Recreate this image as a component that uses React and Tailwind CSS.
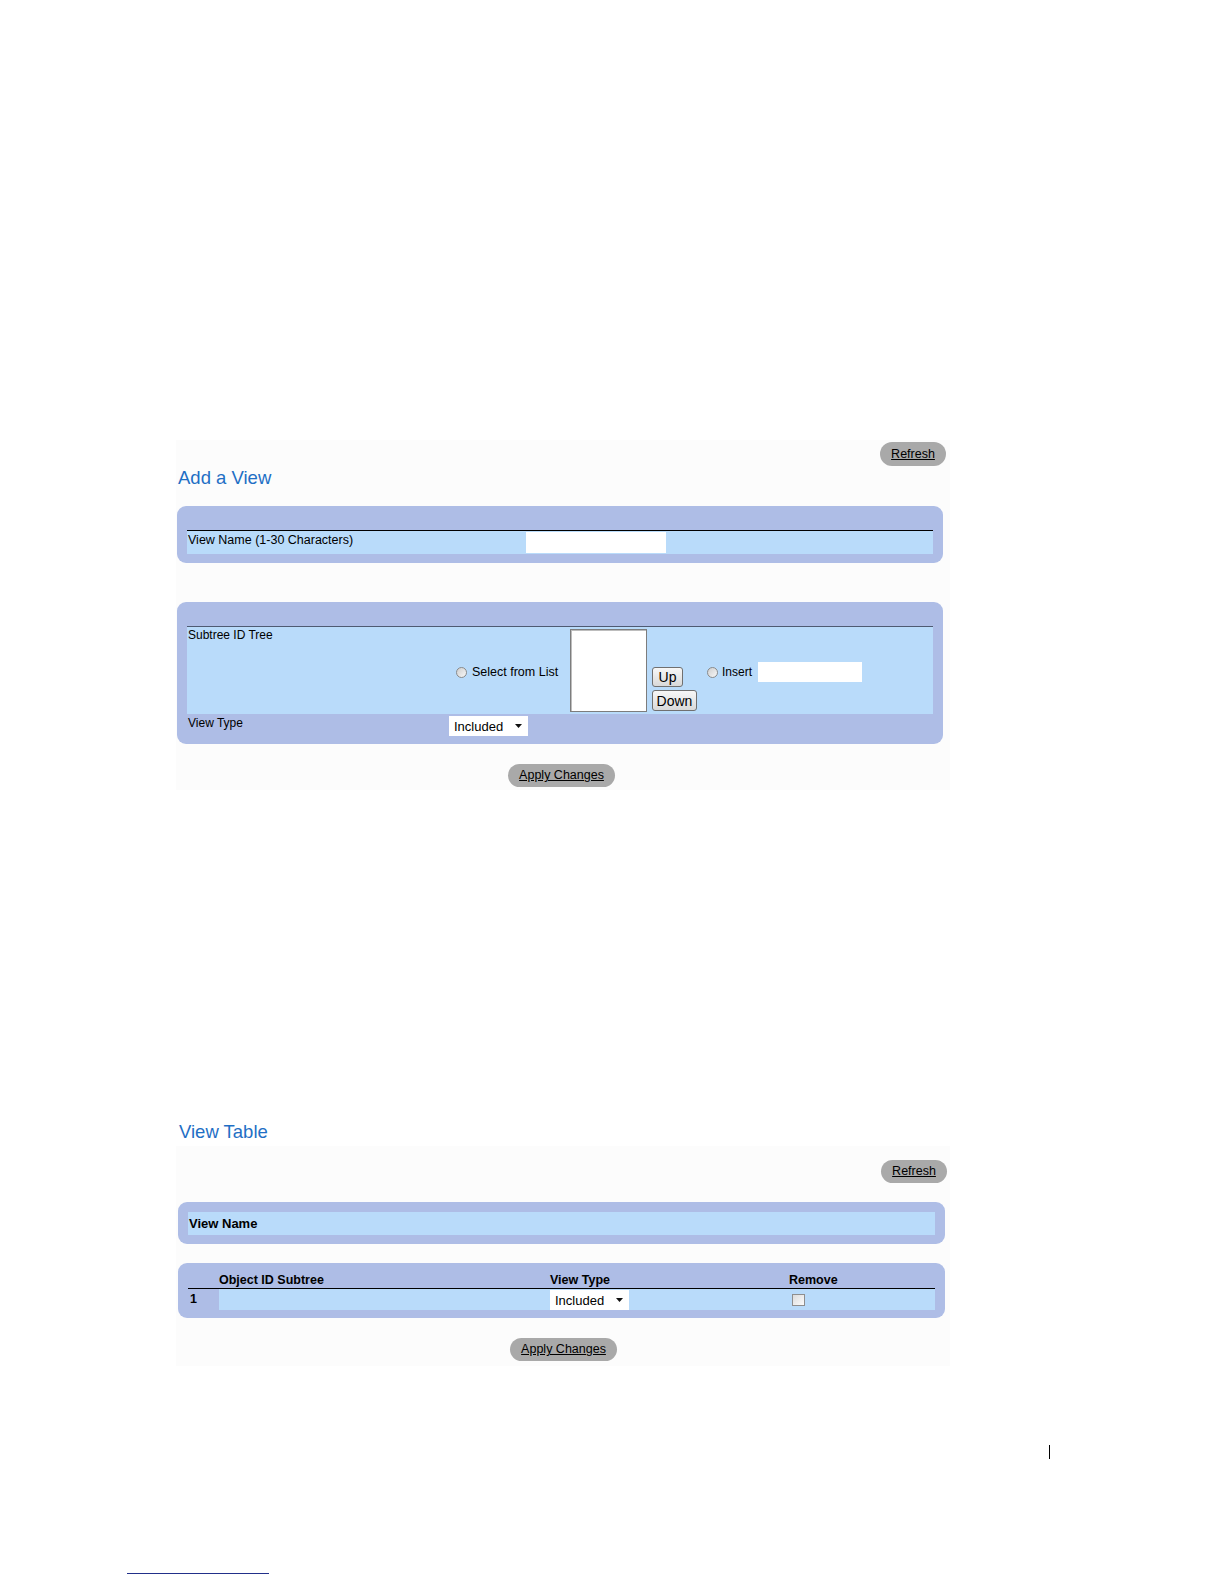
import React from "react";

const font = { fontFamily: '"Liberation Sans", Arial, sans-serif' };

function PillButton({ label, w }) {
  return (
    <div
      className={`flex h-[23px] items-center justify-center rounded-full bg-[#a9a9a9] text-[12.5px] leading-none text-black underline ${w}`}
    >
      {label}
    </div>
  );
}

function Radio() {
  return (
    <span className="inline-block h-[11px] w-[11px] shrink-0 rounded-full border border-[#8a8a8a] bg-gradient-to-br from-[#cfcfcf] to-[#f7f7f7]" />
  );
}

function Select({ w }) {
  return (
    <div className={`flex h-[20px] items-center justify-between bg-white pl-[5px] pr-[6px] text-[13px] leading-none text-black ${w}`}>
      <span>Included</span>
      <svg width="7" height="4" viewBox="0 0 7 4">
        <polygon points="0,0 7,0 3.5,4" fill="#111" />
      </svg>
    </div>
  );
}

function SmallButton({ label, w, h }) {
  return (
    <div
      className={`flex items-center justify-center rounded-[3px] border border-[#707070] bg-gradient-to-b from-[#f7f7f7] to-[#d9d9d9] text-[14px] leading-none text-black ${w} ${h}`}
    >
      {label}
    </div>
  );
}

export default function App() {
  return (
    <div className="relative min-h-[1584px] w-[1224px] overflow-hidden bg-white pt-[440px]" style={font}>
      {/* Section 1 */}
      <div className="ml-[176px] w-[774px] bg-[#fcfcfc] pb-[3px]">
        <div className="flex justify-end pr-[4px] pt-[2px]">
          <PillButton label="Refresh" w="w-[66px] h-[24px]" />
        </div>
        <div className="ml-[2px] mt-[1px] h-[22px] text-[18.5px] leading-[22px] text-[#1f6fc5]">Add a View</div>

        {/* Panel 1 */}
        <div className="ml-[1px] mt-[17px] w-[766px] rounded-[9px] bg-[#aebde6] px-[10px] pb-[9px] pt-[24px]">
          <div className="border-t border-black">
            <div className="flex h-[23px] items-start bg-[#b9dbfa]">
              <div className="w-[339px] pl-[1px] pt-[2px] text-[12.5px] leading-[14px] text-black">
                View Name (1-30 Characters)
              </div>
              <div className="mt-[1px] h-[21px] w-[140px] bg-white" />
            </div>
          </div>
        </div>

        {/* Panel 2 */}
        <div className="ml-[1px] mt-[39px] w-[766px] rounded-[9px] bg-[#aebde6] px-[10px] pb-[8px] pt-[24px]">
          <div className="border-t border-[#4f5a72]">
            <div className="flex h-[87px] bg-[#b9dbfa]">
              <div className="w-[262px] pl-[1px] pt-[1px] text-[12px] leading-[14px] text-black">Subtree ID Tree</div>
              <div className="flex w-[121px] items-center gap-[5px] pl-[7px] pt-[3px] text-[12.5px] leading-none text-black">
                <Radio />
                <span>Select from List</span>
              </div>
              <div className="mt-[2px] h-[83px] w-[77px] border border-[#7d7d7d] bg-white shadow-[inset_1px_1px_0_#bdbdbd]" />
              <div className="ml-[5px] flex flex-col justify-end gap-[3px] pb-[3px]">
                <SmallButton label="Up" w="w-[31px]" h="h-[20px]" />
                <SmallButton label="Down" w="w-[45px]" h="h-[21px]" />
              </div>
              <div className="ml-[10px] flex items-center pt-[3px] text-[12px] leading-none text-black">
                <Radio />
                <span className="ml-[4px]">Insert</span>
                <div className="ml-[6px] h-[20px] w-[104px] bg-white" />
              </div>
            </div>
            <div className="flex h-[22px] items-start">
              <div className="w-[262px] pl-[1px] pt-[2px] text-[12px] leading-[14px] text-black">View Type</div>
              <div className="mt-[2px]">
                <Select w="w-[79px]" />
              </div>
            </div>
          </div>
        </div>

        <div className="ml-[332px] mt-[20px]">
          <PillButton label="Apply Changes" w="w-[107px]" />
        </div>
      </div>

      {/* View Table title */}
      <div className="ml-[179px] mt-[331px] h-[22px] text-[18.5px] leading-[22px] text-[#1f6fc5]">View Table</div>

      {/* Section 2 */}
      <div className="ml-[176px] mt-[3px] w-[774px] bg-[#fcfcfc] pb-[5px]">
        <div className="flex justify-end pr-[3px] pt-[14px]">
          <PillButton label="Refresh" w="w-[66px]" />
        </div>

        {/* Panel 3 */}
        <div className="ml-[2px] mt-[19px] w-[767px] rounded-[9px] bg-[#aebde6] px-[10px] pb-[9px] pt-[10px]">
          <div className="h-[23px] bg-[#b9dbfa] pl-[1px] pt-[4px] text-[13px] font-bold leading-[16px] text-black">
            View Name
          </div>
        </div>

        {/* Panel 4 */}
        <div className="ml-[2px] mt-[19px] w-[767px] rounded-[9px] bg-[#aebde6] px-[10px] pb-[8px] pt-[10px]">
          <div className="flex h-[16px] border-b border-black text-[12.5px] font-bold leading-[15px] text-black">
            <div className="w-[31px]" />
            <div className="w-[331px]">Object ID Subtree</div>
            <div className="w-[239px]">View Type</div>
            <div>Remove</div>
          </div>
          <div className="flex h-[21px]">
            <div className="w-[31px] pl-[2px] pt-[3px] text-[12.5px] font-bold leading-[15px] text-black">1</div>
            <div className="flex flex-1 items-start bg-[#b9dbfa]">
              <div className="w-[331px]" />
              <div className="mt-[1px] w-[239px]">
                <Select w="w-[79px]" />
              </div>
              <div className="ml-[3px] mt-[5px] h-[12px] w-[13px] border border-[#8e8e8e] bg-gradient-to-br from-[#dcdcdc] to-[#fbfbfb]" />
            </div>
          </div>
        </div>

        <div className="ml-[334px] mt-[20px]">
          <PillButton label="Apply Changes" w="w-[107px]" />
        </div>
      </div>

      {/* Page artifacts */}
      <div className="ml-[1049px] mt-[79px] h-[14px] w-px bg-black" />
      <div className="ml-[127px] mt-[114px] h-px w-[142px] bg-[#22308a]" />
    </div>
  );
}
